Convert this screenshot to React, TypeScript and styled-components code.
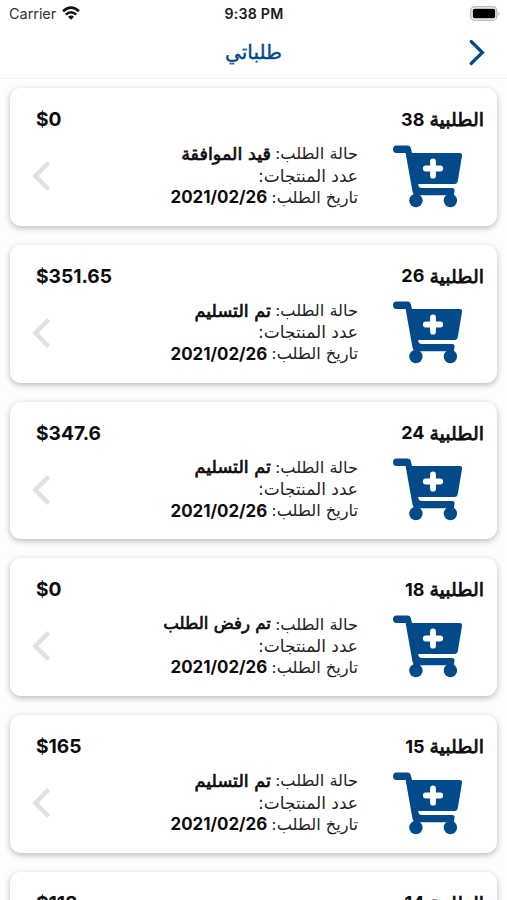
import React from 'react';
import styled, { createGlobalStyle } from 'styled-components';

const BLUE = '#034a8b';

const GlobalStyle = createGlobalStyle`
  * { box-sizing: border-box; }
  html, body { margin: 0; height: 100%; overflow: hidden; }
  body { background: #fdfdfd; font-family: Inter, "DejaVu Sans", sans-serif; color: #0c0c0c; }
  #root { height: 100%; }
  svg { flex: none; }
`;

const Screen = styled.div`
  width: 507px;
  height: 900px;
  overflow: hidden;
  display: flex;
  flex-direction: column;
`;

const StatusBar = styled.div`
  flex: none;
  height: 27px;
  display: grid;
  grid-template-columns: 1fr auto 1fr;
  align-items: center;
  padding: 0 6px 0 9px;
  background: #fff;
  font-size: 14.5px;
  line-height: 27px;
`;

const Carrier = styled.div`
  display: flex;
  align-items: center;
  gap: 6px;
  color: #333;
  letter-spacing: -0.05px;
`;

const CarrierIconSlot = styled.span`
  display: flex;
  padding-bottom: 2px;
`;

const Clock = styled.div`
  margin-left: -2px;
  font-weight: 600;
  font-size: 14.2px;
  letter-spacing: 0.2px;
  color: #1a1a1a;
`;

const BatterySlot = styled.div`
  display: flex;
  justify-content: flex-end;
`;

const Header = styled.header`
  flex: none;
  height: 52px;
  display: grid;
  grid-template-columns: 46px 1fr 46px;
  align-items: center;
  background: #fff;
  border-bottom: 1px solid #f4f4f4;
`;

const PageTitle = styled.h1`
  grid-column: 2;
  margin: 0;
  padding-bottom: 1px;
  text-align: center;
  font-size: 20px;
  font-weight: 400;
  line-height: 49px;
  color: ${BLUE};
  -webkit-text-stroke: 0.4px ${BLUE};
`;

const BackButton = styled.button`
  display: flex;
  border: 0;
  padding: 0 0 1px 8px;
  background: none;
`;

const OrderList = styled.main`
  flex: 1;
  min-height: 0;
  overflow: hidden;
  display: flex;
  flex-direction: column;
  gap: 19px;
  padding: 9px 10px 0;
`;

const Card = styled.article`
  flex: none;
  height: 137.75px;
  border-radius: 11px;
  background: #fff;
  box-shadow: 0 2px 6px rgba(0, 0, 0, 0.27);
  padding: 16px 13px 0 21px;
`;

const CardTop = styled.div`
  display: flex;
  justify-content: space-between;
  align-items: center;
  height: 30px;
  padding-left: 5px;
`;

const Price = styled.span`
  font-weight: 700;
  font-size: 19.2px;
`;

const OrderName = styled.div`
  display: flex;
  align-items: center;
  gap: 5px;
  font-weight: 700;
  font-size: 18px;
`;

const ArabicBold = styled.span`
  font-family: "DejaVu Sans", sans-serif;
  font-weight: 400;
  font-size: 19px;
  line-height: 26px;
  -webkit-text-stroke: 0.75px #0c0c0c;
`;

const CardBody = styled.div`
  display: flex;
  align-items: flex-start;
`;

const Details = styled.div`
  flex: 1;
  padding: 9px 35px 0 0;
`;

const DetailLine = styled.div`
  display: flex;
  align-items: center;
  gap: 4px;
  height: 21.7px;
  white-space: nowrap;
`;

const Label = styled.span<{ $wide?: boolean }>`
  font-family: "DejaVu Sans", sans-serif;
  font-size: ${({ $wide }) => ($wide ? '17px' : '16.2px')};
  color: #222;
`;

const Status = styled.span<{ $long: boolean }>`
  font-family: "DejaVu Sans", sans-serif;
  font-size: ${({ $long }) => ($long ? '16.6px' : '17.6px')};
  line-height: 20px;
  -webkit-text-stroke: 0.7px #0c0c0c;
`;

const DateText = styled.span`
  font-weight: 700;
  font-size: 16.9px;
`;

const CartSlot = styled.div`
  display: flex;
  width: 91px;
  padding: 10.5px 21px 0 0;
`;

const ArrowSlot = styled.div`
  display: flex;
  width: 20px;
  padding-top: 26px;
`;

const WifiIcon = () => (
  <svg width="18" height="14" viewBox="0 0 18 14" fill="none" stroke="#111" strokeWidth="2.5">
    <path d="M1 5.2Q9-2 17 5.2M3.8 8.6Q9 3.8 14.2 8.6" />
    <path d="M9 13.8 6 10.8Q9 8.3 12 10.8Z" fill="#111" stroke="none" />
  </svg>
);

const BatteryIcon = () => (
  <svg width="31" height="15" viewBox="0 0 31 15">
    <rect x="0.8" y="0.8" width="26" height="13.4" rx="4" fill="#fff" stroke="#bdbdbd" strokeWidth="1.5" />
    <rect x="2.8" y="2.8" width="22.4" height="9.4" rx="1.8" fill="#000" />
    <path d="M28.4 5.2Q30.6 7.5 28.4 9.8Z" fill="#aaa" />
  </svg>
);

const BackIcon = () => (
  <svg width="17" height="27" viewBox="0 0 17 27" fill="none" stroke={BLUE} strokeWidth="3.2" strokeLinecap="round">
    <path d="M2.2 2.5 13.4 13.5 2.2 24.5" />
  </svg>
);

const ArrowIcon = () => (
  <svg width="20" height="32" viewBox="0 0 20 32" fill="none" stroke="#e1e1e1" strokeWidth="4.6">
    <path d="M17.6 2.6 4.4 16 17.6 29.4" />
  </svg>
);

const CartIcon = () => (
  <svg width="70" height="63" viewBox="0 0 70 63" fill={BLUE}>
    <path d="M3.5.5H15Q17.2.5 17.8 3L19 8H66.5Q69.5 8 69 11L64.8 36Q64.3 39 61.5 39H25.2Q25.2 43 29 43H59Q62 43 61.5 46L60.8 50.2H23.5Q20 50.2 19.4 46L12.6 8H3.5Q0 8 0 4.3T3.5.5Z" />
    <circle cx="22.9" cy="55.5" r="6.7" />
    <circle cx="57.4" cy="55.5" r="6.7" />
    <path d="M40 16.3V30.7M32.8 23.5H47.2" stroke="#fff" strokeWidth="5.8" strokeLinecap="round" />
  </svg>
);

interface Order {
  id: number;
  price: string;
  status: string;
}

const orders: Order[] = [
  { id: 38, price: '$0', status: 'قيد الموافقة' },
  { id: 26, price: '$351.65', status: 'تم التسليم' },
  { id: 24, price: '$347.6', status: 'تم التسليم' },
  { id: 18, price: '$0', status: 'تم رفض الطلب' },
  { id: 15, price: '$165', status: 'تم التسليم' },
  { id: 14, price: '$118', status: 'تم التسليم' },
];

const OrderCard = ({ order }: { order: Order }) => (
  <Card>
    <CardTop>
      <Price>{order.price}</Price>
      <OrderName dir="rtl">
        <ArabicBold>الطلبية</ArabicBold>
        <span>{order.id}</span>
      </OrderName>
    </CardTop>
    <CardBody>
      <ArrowSlot><ArrowIcon /></ArrowSlot>
      <Details dir="rtl">
        <DetailLine>
          <Label>حالة الطلب:</Label>
          <Status $long={order.status.split(' ').length > 2}>{order.status}</Status>
        </DetailLine>
        <DetailLine><Label $wide>عدد المنتجات:</Label></DetailLine>
        <DetailLine><Label>تاريخ الطلب:</Label><DateText dir="ltr">2021/02/26</DateText></DetailLine>
      </Details>
      <CartSlot><CartIcon /></CartSlot>
    </CardBody>
  </Card>
);

const App = () => (
  <>
    <GlobalStyle />
    <Screen>
      <StatusBar>
        <Carrier>Carrier <CarrierIconSlot><WifiIcon /></CarrierIconSlot></Carrier>
        <Clock>9:38 PM</Clock>
        <BatterySlot><BatteryIcon /></BatterySlot>
      </StatusBar>
      <Header>
        <PageTitle dir="rtl">طلباتي</PageTitle>
        <BackButton aria-label="رجوع"><BackIcon /></BackButton>
      </Header>
      <OrderList>
        {orders.map((order) => <OrderCard key={order.id} order={order} />)}
      </OrderList>
    </Screen>
  </>
);

export default App;
